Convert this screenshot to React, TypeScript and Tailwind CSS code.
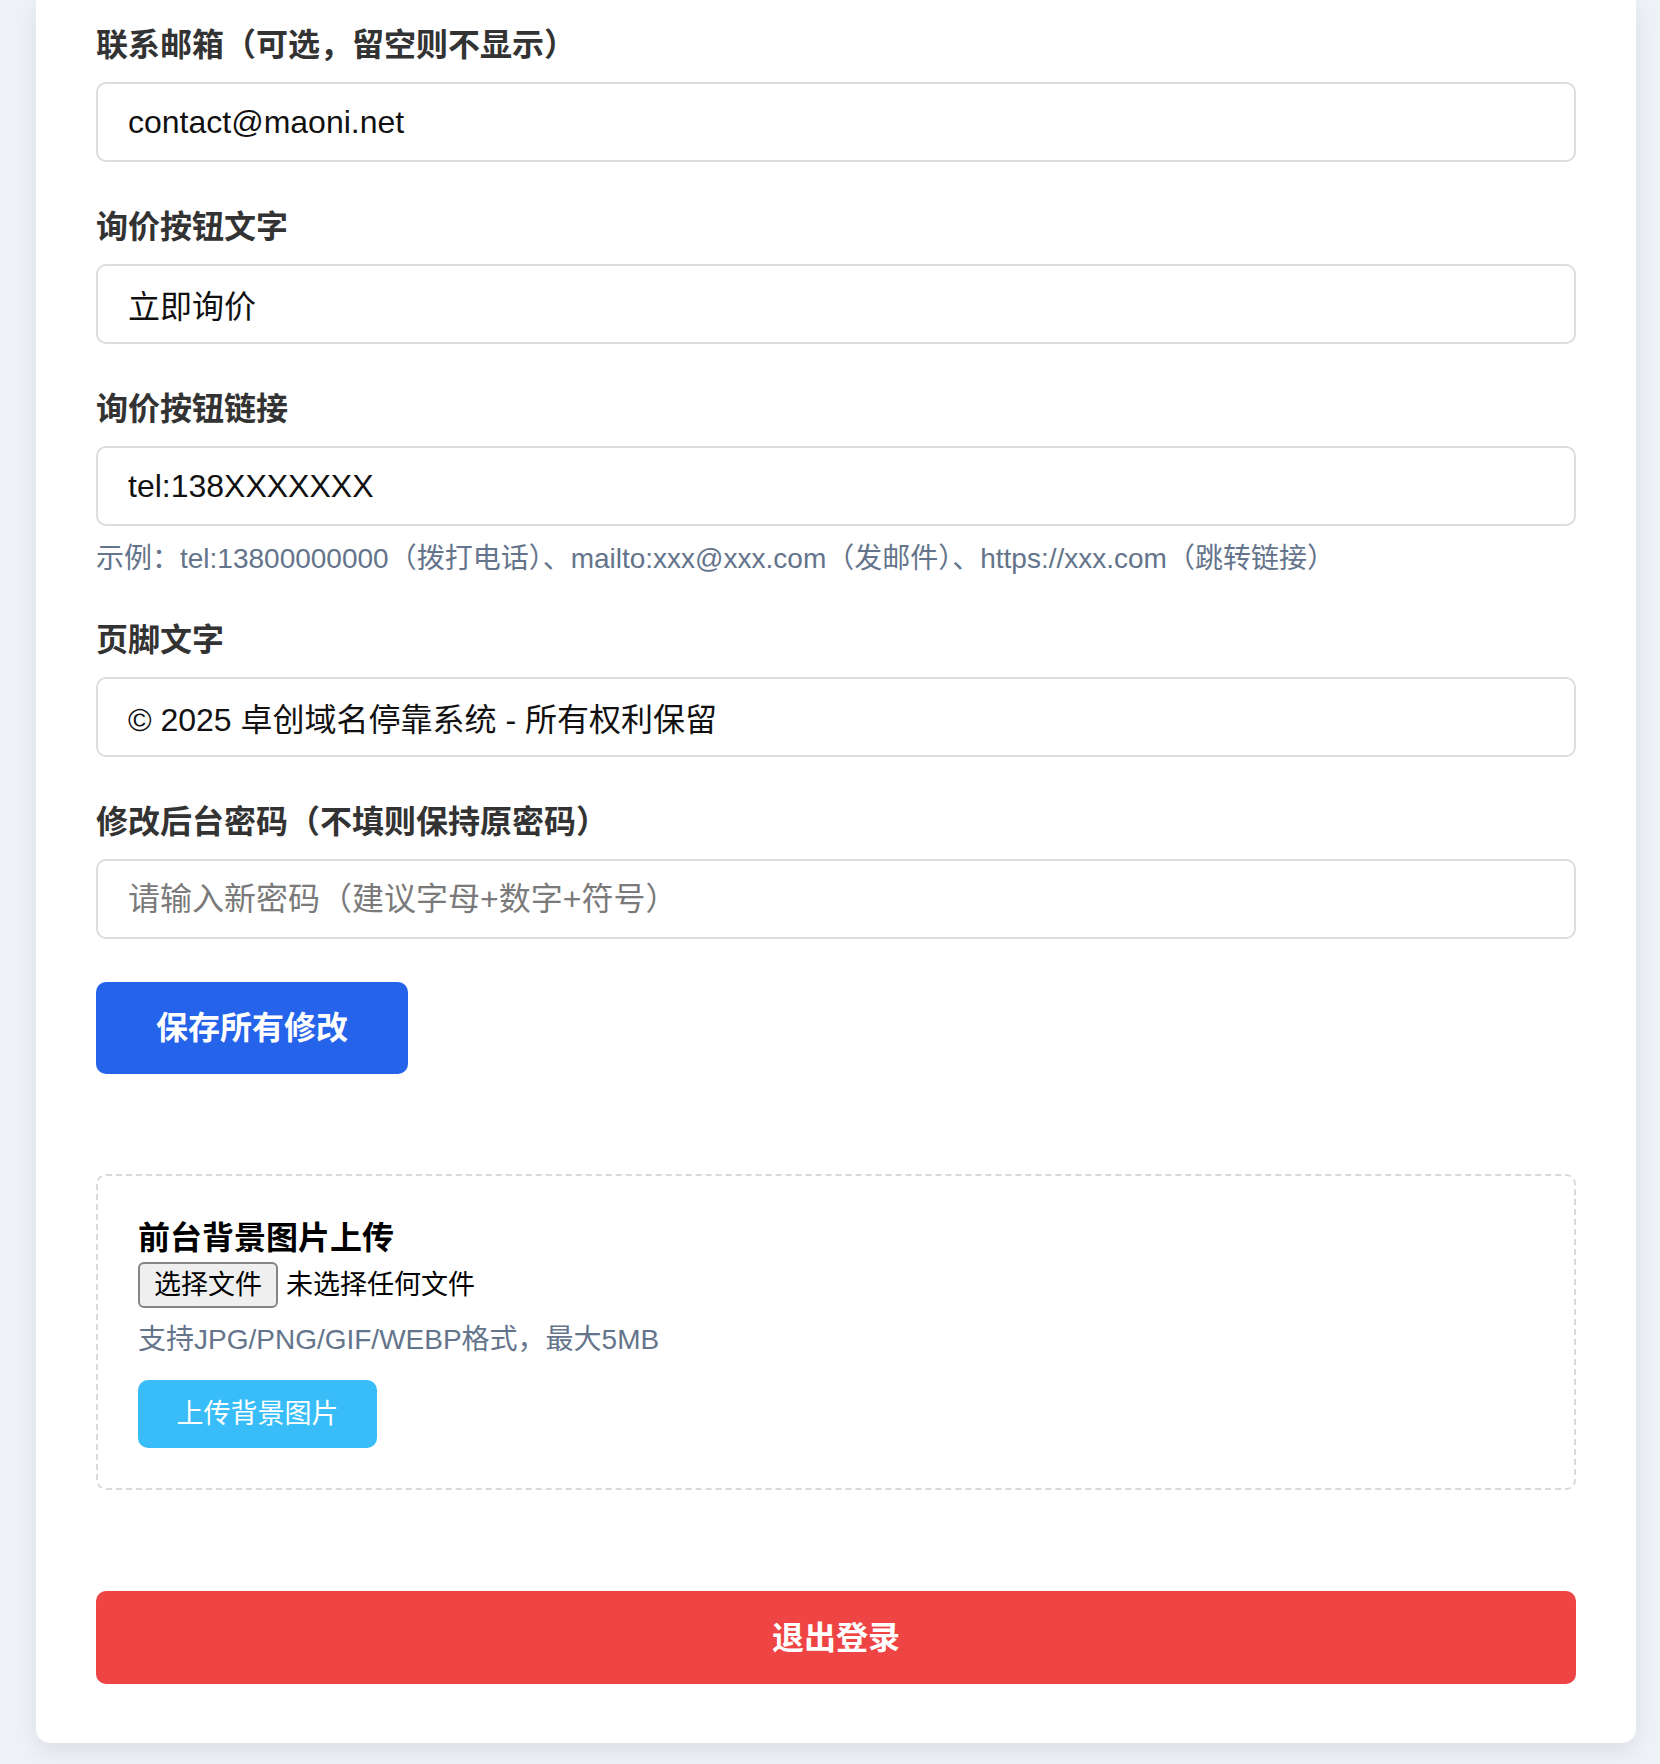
import React from 'react'

const font = { fontFamily: '"Liberation Sans", "Noto Sans CJK SC", sans-serif' }

function Field({ label, value, placeholder, hint }: { label: string; value?: string; placeholder?: string; hint?: string }) {
  return (
    <div className="mb-[43px]">
      <label className="block text-[32px] leading-[44px] font-bold text-[#333333] mb-[15px]">{label}</label>
      <input
        readOnly
        defaultValue={value}
        placeholder={placeholder}
        className="block w-full h-[80px] px-[30px] text-[32px] text-[#111111] placeholder:text-[#7a7a7a] bg-white border-2 border-[#dddddd] rounded-[10px] outline-none"
        style={font}
      />
      {hint && <p className="mt-[16px] text-[28px] leading-[33px] text-[#64748b]">{hint}</p>}
    </div>
  )
}

export default function App() {
  return (
    <div className="min-h-[1764px] bg-[#eef1f5] pl-[36px]" style={font}>
      <div className="w-[1600px] bg-white rounded-b-[14px] shadow-[0_8px_20px_rgba(0,0,0,0.08)] px-[60px] pt-[23px] pb-[59px]">
        <Field label="联系邮箱（可选，留空则不显示）" value="contact@maoni.net" />
        <Field label="询价按钮文字" value="立即询价" />
        <Field
          label="询价按钮链接"
          value="tel:138XXXXXXX"
          hint="示例：tel:13800000000（拨打电话）、mailto:xxx@xxx.com（发邮件）、https://xxx.com（跳转链接）"
        />
        <Field label="页脚文字" value="© 2025 卓创域名停靠系统 - 所有权利保留" />
        <Field label="修改后台密码（不填则保持原密码）" placeholder="请输入新密码（建议字母+数字+符号）" />

        <button className="h-[92px] px-[60px] bg-[#2563eb] text-white text-[32px] font-bold rounded-[10px]">
          保存所有修改
        </button>

        <div className="mt-[100px] border-2 border-dashed border-[#d9d9d9] rounded-[10px] p-[40px]">
          <h3 className="text-[32px] leading-[44px] font-bold text-black">前台背景图片上传</h3>
          <div className="flex items-center mt-[2px]">
            <span className="h-[46px] px-[14px] flex items-center bg-[#efefef] border-2 border-[#858585] rounded-[6px] text-[27px] text-black">
              选择文件
            </span>
            <span className="ml-[8px] text-[27px] text-black">未选择任何文件</span>
          </div>
          <p className="mt-[12px] text-[28px] leading-[40px] text-[#64748b]">支持JPG/PNG/GIF/WEBP格式，最大5MB</p>
          <button className="mt-[20px] h-[68px] w-[239px] bg-[#38bdf8] text-white text-[27px] rounded-[10px]">
            上传背景图片
          </button>
        </div>

        <button className="mt-[101px] w-full h-[93px] bg-[#ef4444] text-white text-[32px] font-bold rounded-[10px]">
          退出登录
        </button>
      </div>
    </div>
  )
}
